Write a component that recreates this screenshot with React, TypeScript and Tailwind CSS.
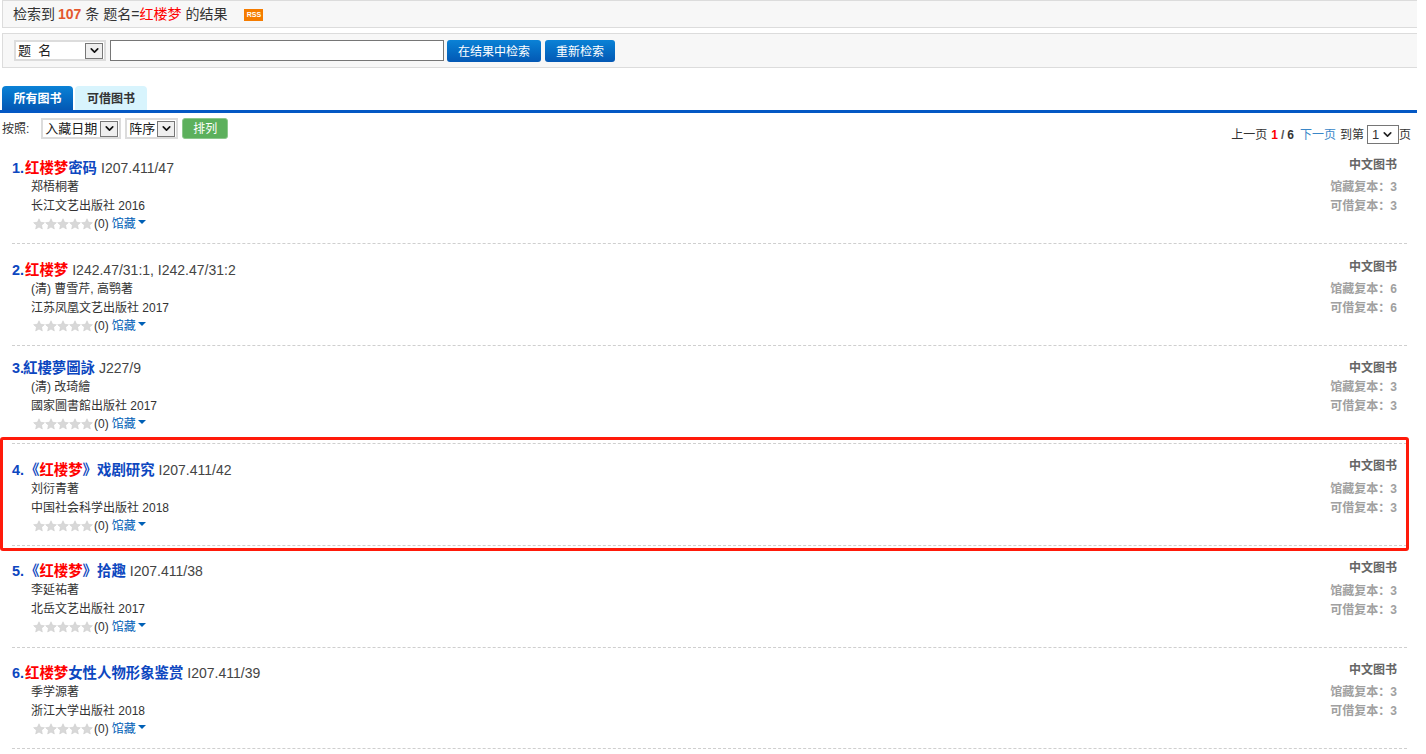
import { ChevronDown } from 'lucide-react'

const books = [
  { no: '1.', pre: '', hit: '红楼梦', post: '密码', call: 'I207.411/47', author: '郑梧桐著', pub: '长江文艺出版社 2016', total: 3, avail: 3, h: 'h-[102px]', pt: 'pt-[16px]', nm: 'mr-px', rt: 'pt-[13px]', gap: 'mt-[3px]' },
  { no: '2.', pre: '', hit: '红楼梦', post: '', call: 'I242.47/31:1, I242.47/31:2', author: '(清) 曹雪芹, 高鹗著', pub: '江苏凤凰文艺出版社 2017', total: 6, avail: 6, h: 'h-[102px]', pt: 'pt-[16px]', nm: 'mr-px', rt: 'pt-[13px]', gap: 'mt-[3px]' },
  { no: '3.', pre: '', hit: '', post: '紅樓夢圖詠', call: 'J227/9', author: '(清) 改琦繪', pub: '國家圖書館出版社 2017', total: 3, avail: 3, h: 'h-[98px]', pt: 'pt-[12px]', nm: 'mr-[-1px]', rt: 'pt-[12px]', gap: 'mt-0' },
  { no: '4.', pre: '《', hit: '红楼梦', post: '》戏剧研究', call: 'I207.411/42', author: '刘衍青著', pub: '中国社会科学出版社 2018', total: 3, avail: 3, h: 'h-[102px]', pt: 'pt-[16px]', nm: 'mr-px', rt: 'pt-[12px]', gap: 'mt-[4px]' },
  { no: '5.', pre: '《', hit: '红楼梦', post: '》拾趣', call: 'I207.411/38', author: '李延祐著', pub: '北岳文艺出版社 2017', total: 3, avail: 3, h: 'h-[102px]', pt: 'pt-[15px]', nm: 'mr-px', rt: 'pt-[12px]', gap: 'mt-[4px]' },
  { no: '6.', pre: '', hit: '红楼梦', post: '女性人物形象鉴赏', call: 'I207.411/39', author: '季学源著', pub: '浙江大学出版社 2018', total: 3, avail: 3, h: 'h-[101px]', pt: 'pt-[15px]', nm: 'mr-px', rt: 'pt-[12px]', gap: 'mt-[3px]' },
]

const Star = () => (
  <svg viewBox="0 0 24 24" className="w-[12px] h-[12px]">
    <path d="M12 1.5l3.2 7 7.6.8-5.7 5.1 1.6 7.5L12 18.1l-6.7 3.8 1.6-7.5L1.2 9.3l7.6-.8z" fill="#d8d8d8" stroke="#c8c8c8" strokeWidth="1" strokeLinejoin="round" />
  </svg>
)

const FakeSelect = ({ label, className }: { label: string; className: string }) => (
  <div className={`flex items-center justify-between border-2 border-[#dcdcdc] bg-white h-[21px] pl-[2px] pr-px text-[13px] text-[#222] ${className}`}>
    <span className="whitespace-pre">{label}</span>
    <span className="flex items-center justify-center w-[18px] h-[16px] border border-[#777] bg-[#efefef]">
      <ChevronDown size={13} strokeWidth={3} className="text-[#111]" />
    </span>
  </div>
)

const App = () => {
  return (
    <div className="relative w-[1426px] h-[754px] overflow-hidden bg-white text-[12px] text-[#333] font-['Liberation_Sans','Noto_Sans_CJK_SC',sans-serif]">
      <div className="w-[1417px]">
        <div className="ml-[2px] h-[28px] flex items-center pl-[10px] bg-[#f7f7f7] border-y-[1px] border-l-[1px] border-[#dcdcdc] text-[14px]">
          <span>检索到</span>
          <span className="ml-[3px] font-bold text-[#e4572e]">107</span>
          <span className="ml-[4px]">条 题名=</span>
          <span className="text-[#ff0000]">红楼梦</span>
          <span className="ml-[4px]">的结果</span>
          <span className="ml-[17px] mt-[2px] w-[19px] h-[12px] bg-[#f57c00] text-white text-[7px] leading-[12px] text-center font-bold">RSS</span>
        </div>

        <div className="ml-[2px] mt-[5px] h-[35px] flex items-center pl-[11px] bg-[#f7f7f7] border-y-[1px] border-l-[1px] border-[#dcdcdc]">
          <FakeSelect label="题  名" className="w-[92px]" />
          <input type="text" className="ml-[4px] w-[334px] h-[21px] border border-[#767676] bg-white" />
          <button className="ml-[3px] w-[94px] h-[22px] pt-[2px] rounded-[3px] bg-gradient-to-b from-[#0b82d6] to-[#0458b4] text-white text-[12px]">在结果中检索</button>
          <button className="ml-[4px] w-[70px] h-[22px] pt-[2px] rounded-[3px] bg-gradient-to-b from-[#0b82d6] to-[#0458b4] text-white text-[12px]">重新检索</button>
        </div>

        <div className="mt-[17px] h-[25px] flex items-end pl-[2px] font-bold text-[12px]">
          <div className="w-[71px] h-[24px] pt-px flex items-center justify-center rounded-t-[4px] bg-gradient-to-b from-[#0b82d6] to-[#0458b4] text-white">所有图书</div>
          <div className="ml-[2px] w-[72px] h-[24px] pt-px flex items-center justify-center rounded-t-[4px] bg-[#d8f4fd] text-[#333]">可借图书</div>
        </div>
        <div className="h-[3px] bg-[#0458c4]" />

        <div className="h-[36px] flex items-start justify-between">
          <div className="flex items-center pl-[2px] pt-[5px]">
            <span>按照:</span>
            <FakeSelect label="入藏日期" className="ml-[12px] w-[80px]" />
            <FakeSelect label="阵序" className="ml-[4px] w-[53px]" />
            <button className="ml-[4px] w-[46px] h-[21px] pt-px rounded-[3px] bg-[#5cb05c] border border-[#8cc88c] text-white">排列</button>
          </div>
          <div className="flex items-center pt-[12px] pr-[6px]">
            <span>上一页</span>
            <span className="ml-[4px] font-bold text-[#ff0000]">1</span>
            <span className="ml-[3px] font-bold text-[#555]">/</span>
            <span className="ml-[3px] font-bold">6</span>
            <span className="ml-[6px] text-[#3a87c8]">下一页</span>
            <span className="ml-[4px]">到第</span>
            <span className="ml-[3px] flex items-center justify-between w-[32px] h-[19px] px-[4px] border border-[#767676] text-[13px]">
              1<ChevronDown size={13} strokeWidth={3} className="text-[#222]" />
            </span>
            <span>页</span>
          </div>
        </div>

        <ul className="mt-[-7px]">
          {books.map((b) => (
            <li key={b.no} className={`ml-[12px] mr-[10px] flex items-start justify-between border-b border-dashed border-[#cfcfcf] ${b.h}`}>
              <div className={b.pt}>
                <div className="h-[20px] flex items-center text-[14.4px] leading-[20px]">
                  <span className={`font-bold text-[#0d47c0] ${b.nm}`}>{b.no}</span>
                  <span className="font-bold text-[#0d47c0]">{b.pre}</span>
                  <span className="font-bold text-[#ff0000]">{b.hit}</span>
                  <span className="font-bold text-[#0d47c0]">{b.post}</span>
                  <span className="ml-[4px] text-[14px] text-[#444]">{b.call}</span>
                </div>
                <div className="ml-[19px] h-[19px] leading-[19px]">{b.author}</div>
                <div className="ml-[19px] h-[19px] leading-[19px]">{b.pub}</div>
                <div className="ml-[21px] mt-[-2px] h-[19px] flex items-center">
                  <Star /><Star /><Star /><Star /><Star />
                  <span className="ml-px">(0)</span>
                  <span className="ml-[3px] text-[#0060b6]">馆藏</span>
                  <span className="ml-[2px] mb-[3px] w-0 h-0 border-x-[4px] border-x-transparent border-t-[4px] border-t-[#0060b6]" />
                </div>
              </div>
              <div className={`mr-[10px] text-right font-bold ${b.rt}`}>
                <div className="h-[20px] leading-[20px] text-[#666]">中文图书</div>
                <div className={`h-[19px] leading-[19px] text-[#a0a0a0] ${b.gap}`}>馆藏复本：{b.total}</div>
                <div className="h-[19px] leading-[19px] text-[#a0a0a0]">可借复本：{b.avail}</div>
              </div>
            </li>
          ))}
        </ul>
      </div>

      {/* red mark drawn over the fourth record */}
      <div className="absolute left-0 top-[437px] w-[1409px] h-[114px] border-[3px] border-[#ff1a0a] rounded-[3px] pointer-events-none" />
    </div>
  )
}

export default App
